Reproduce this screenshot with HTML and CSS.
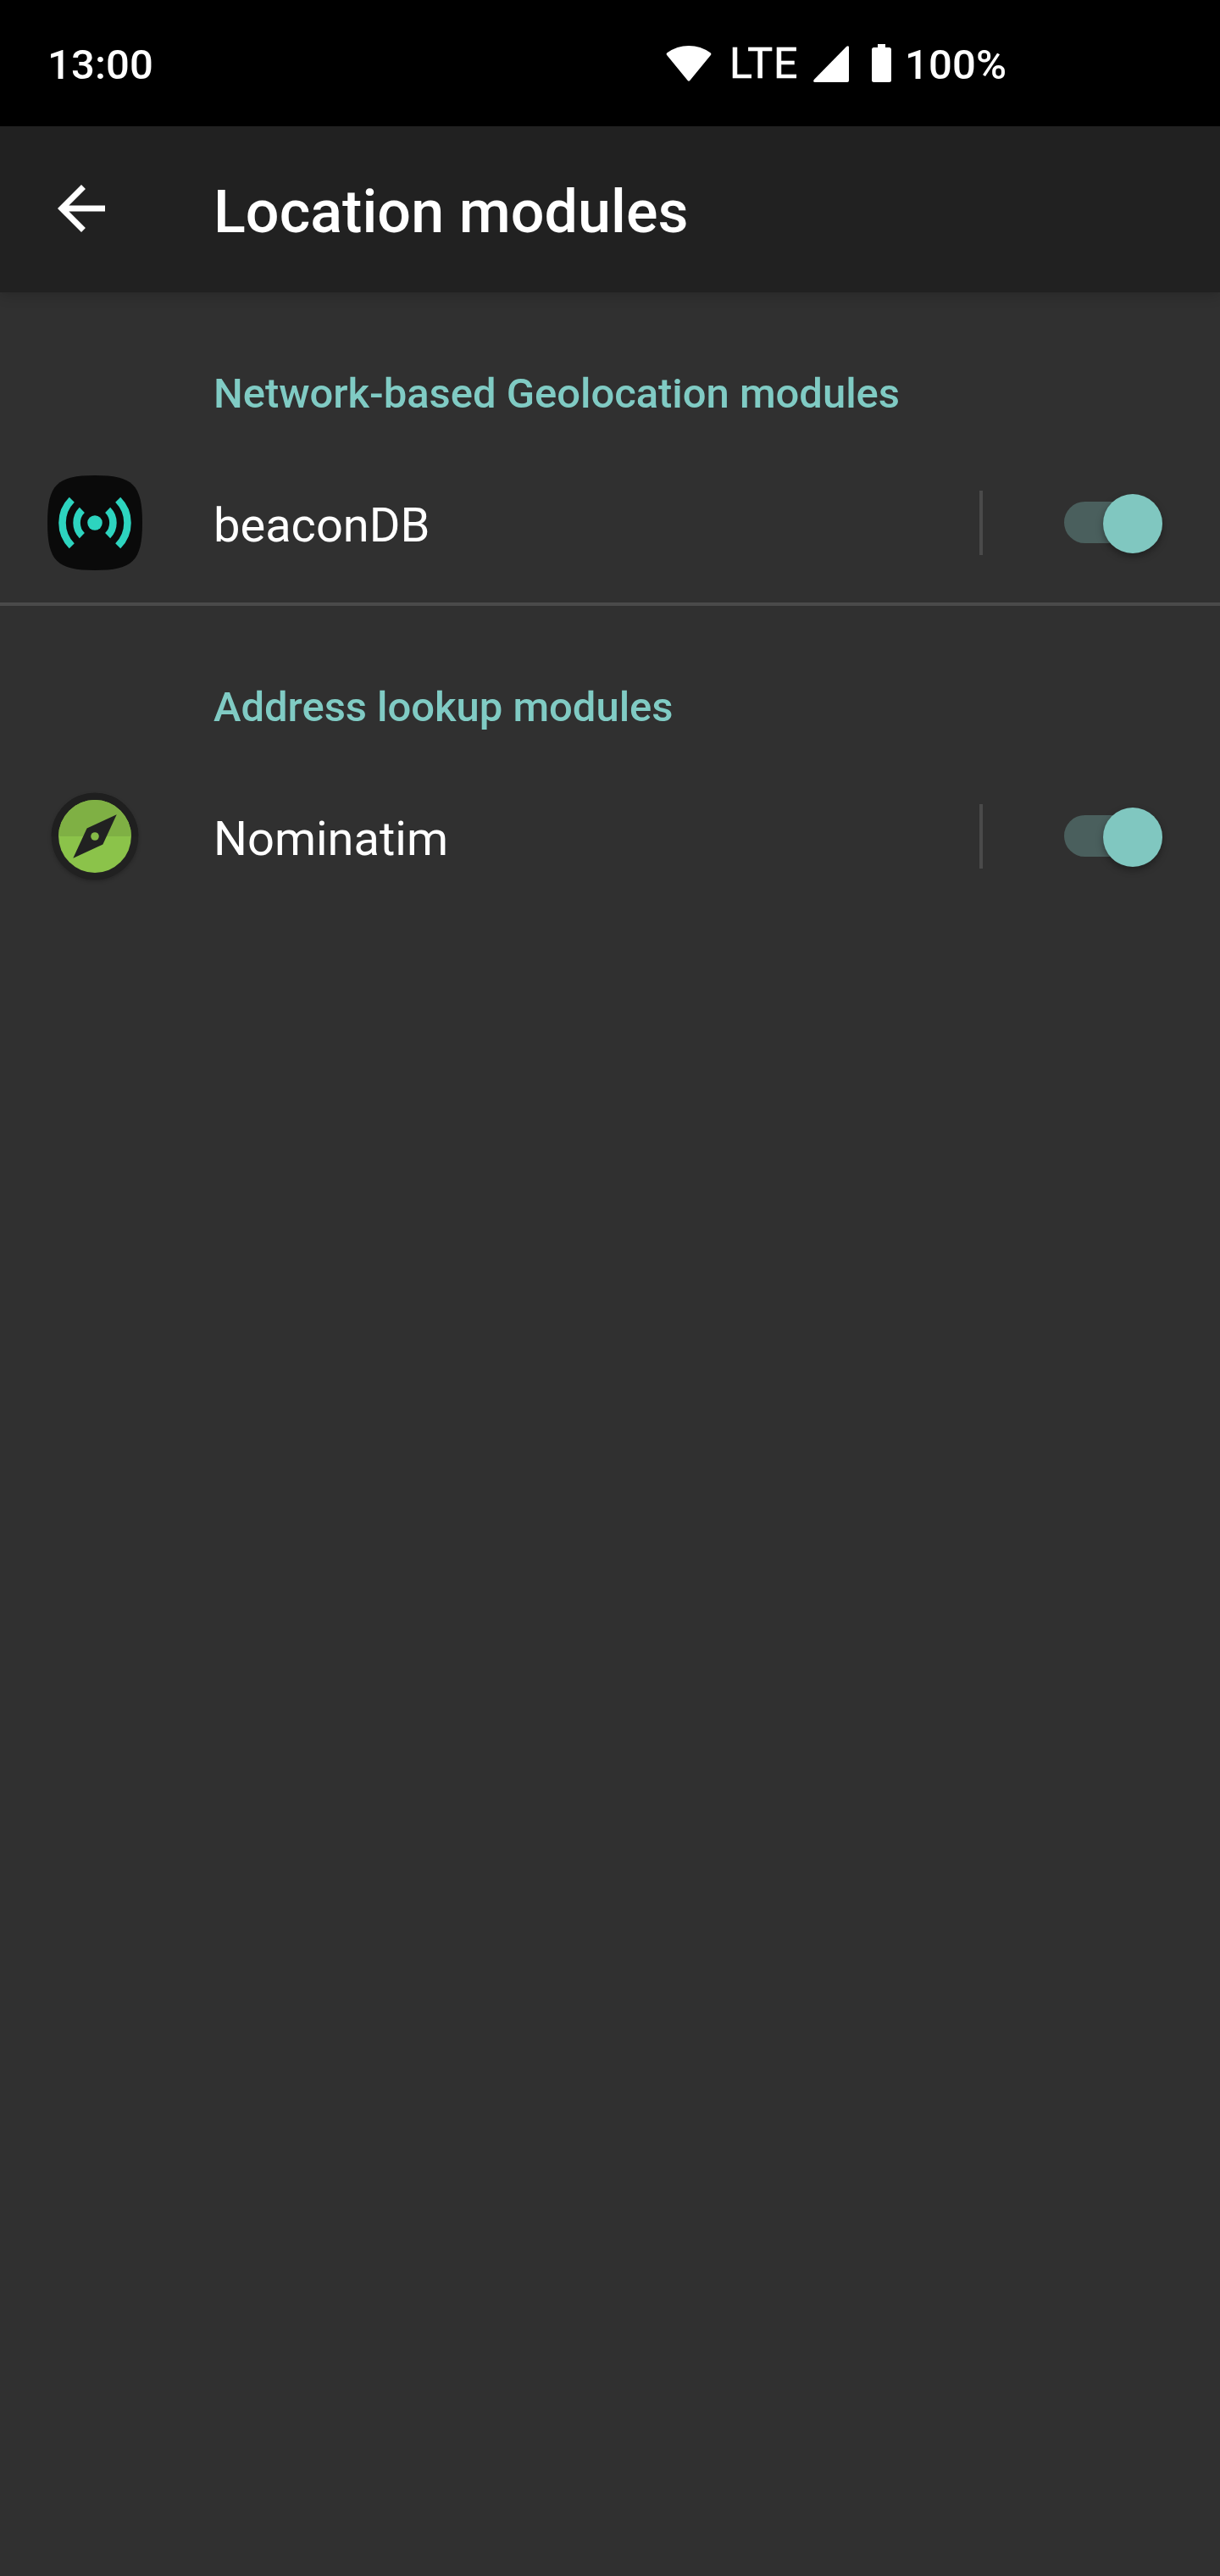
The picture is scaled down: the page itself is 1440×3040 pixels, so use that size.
FILE: index.html
```html
<!DOCTYPE html>
<html lang="en">
<head>
<meta charset="utf-8">
<title>Location modules</title>
<link rel="stylesheet" href="styles.css">
</head>
<body>
<div class="status-bar">
  <span class="clock">13:00</span>
  <svg class="wifi" width="54" height="44" viewBox="0 0 54 44"><path fill="#fff" d="M1.3 12.2Q-.2 10.600 1.500 9.300Q13 1 27 1T52.500 9.300Q54.200 10.600 52.700 12.200L28.300 42Q27 43.500 25.700 42Z"/></svg>
  <span class="network">LTE</span>
  <svg class="signal" width="42" height="43" viewBox="0 0 42 43"><path fill="#fff" d="M39.300.8Q42-1 42 2V41Q42 43 40 43H2Q-1 43 .8 40Z"/></svg>
  <svg class="battery" width="23" height="45" viewBox="0 0 23 45"><path fill="#fff" d="M7 0H16V4H20.500Q23 4 23 6.500V42.500Q23 45 20.500 45H2.500Q0 45 0 42.500V6.500Q0 4 2.500 4H7Z"/></svg>
  <span class="charge">100%</span>
</div>
<header class="app-bar">
  <svg class="back" width="84" height="84" viewBox="0 0 24 24"><path fill="#fff" d="M20 11H7.830l5.590-5.590L12 4l-8 8 8 8 1.410-1.410L7.830 13H20v-2z"/></svg>
  <h1 class="title">Location modules</h1>
</header>
<main>
  <section class="group">
    <h2 class="category">Network-based Geolocation modules</h2>
    <div class="row">
      <svg class="module-icon" width="112" height="112" viewBox="0 0 112 112">
        <path fill="#0a0a0a" d="M56 0C11.200 0 0 11.200 0 56S11.200 112 56 112 112 100.800 112 56 100.800 0 56 0Z"/>
        <g transform="translate(56 56) scale(4.280)" fill="none" stroke="#2dd4bf" stroke-width="2">
          <circle r="2.050" fill="#2dd4bf" stroke="none"/>
          <path d="M-3.540-3.540A5 5 0 0 0-3.540 3.540M3.540-3.540A5 5 0 0 1 3.540 3.540M-6.360-6.360A9 9 0 0 0-6.360 6.360M6.360-6.360A9 9 0 0 1 6.360 6.360"/>
        </g>
      </svg>
      <span class="name">beaconDB</span>
      <span class="separator"></span>
      <span class="switch"><span class="thumb"></span></span>
    </div>
  </section>
  <section class="group">
    <h2 class="category">Address lookup modules</h2>
    <div class="row">
      <svg class="module-icon compass" width="112" height="112" viewBox="0 0 112 112">
        <circle cx="56" cy="56" r="51.300" fill="#212121"/>
        <path fill="#1f1f1f" d="M4.700 56a51.300 51.300 0 0 1 102.600 0z"/>
        <circle cx="56" cy="56" r="42.900" fill="#8bc34a"/>
        <path fill="#7fb044" d="M13.100 56a42.900 42.900 0 0 1 85.800 0z"/>
        <path fill="#212121" d="M81.700 30.300L65.400 65.400 30.300 81.700 46.600 46.600z"/>
        <circle cx="56" cy="56" r="4.800" fill="#85ba47"/>
      </svg>
      <span class="name">Nominatim</span>
      <span class="separator"></span>
      <span class="switch"><span class="thumb"></span></span>
    </div>
  </section>
</main>
</body>
</html>
```
FILE: styles.css
```css
* { box-sizing: border-box; }

body {
  margin: 0;
  min-height: 3040px;
  background: #303030;
  color: #fff;
  font-family: Roboto, sans-serif;
}

svg { display: block; flex: none; }

.status-bar {
  display: flex;
  height: 149px;
  background: #000;
  font-size: 49px;
  line-height: 58px;
}

.clock {
  width: 786px;
  padding: 48px 0 0 56px;
  font-weight: 500;
  letter-spacing: .15px;
}

.wifi { margin-top: 53px; }

.network {
  width: 99px;
  margin-left: 21px;
  padding-top: 46px;
  font-size: 50px;
  letter-spacing: 1px;
  -webkit-text-stroke: .7px #fff;
}

.signal { margin-top: 54px; }
.battery { margin: 52px 0 0 27px; }

.charge {
  margin-left: 16px;
  padding-top: 48px;
  font-weight: 500;
  letter-spacing: .15px;
}

.app-bar {
  display: flex;
  height: 196px;
  padding-left: 54px;
  background: #212121;
  box-shadow: 0 4px 14px rgba(0, 0, 0, .16);
}

.back { margin-top: 54.5px; }

.title {
  margin: 0 0 0 114px;
  padding-top: 6px;
  font-size: 70px;
  font-weight: 500;
  line-height: 190px;
  letter-spacing: .07px;
}

.group + .group { border-top: 4px solid #4a4a4a; }

.category {
  height: 178px;
  margin: 0;
  padding: 91px 0 0 252px;
  color: #80cbc4;
  font-size: 49px;
  font-weight: 500;
  line-height: 58px;
  letter-spacing: -.04px;
}

.row {
  display: flex;
  align-items: center;
  height: 188px;
  padding: 0 68px 0 56px;
}

.module-icon { margin-right: 84px; }
.compass { filter: drop-shadow(0 2px 2px rgba(0, 0, 0, .22)); }

.name {
  flex: 1;
  padding-top: 6px;
  font-size: 56px;
  line-height: 66px;
}

.separator {
  width: 4px;
  height: 76px;
  margin-right: 96px;
  background: #4a4a4a;
}

.switch {
  display: flex;
  align-items: center;
  justify-content: flex-end;
  width: 116px;
  height: 49px;
  margin-bottom: 1px;
  border-radius: 25px;
  background: #4a5f5d;
}

.thumb {
  width: 70px;
  height: 70px;
  margin-top: 2px;
  border-radius: 50%;
  background: #80c7c0;
  box-shadow: 0 4px 8px rgba(0, 0, 0, .35);
}
```
